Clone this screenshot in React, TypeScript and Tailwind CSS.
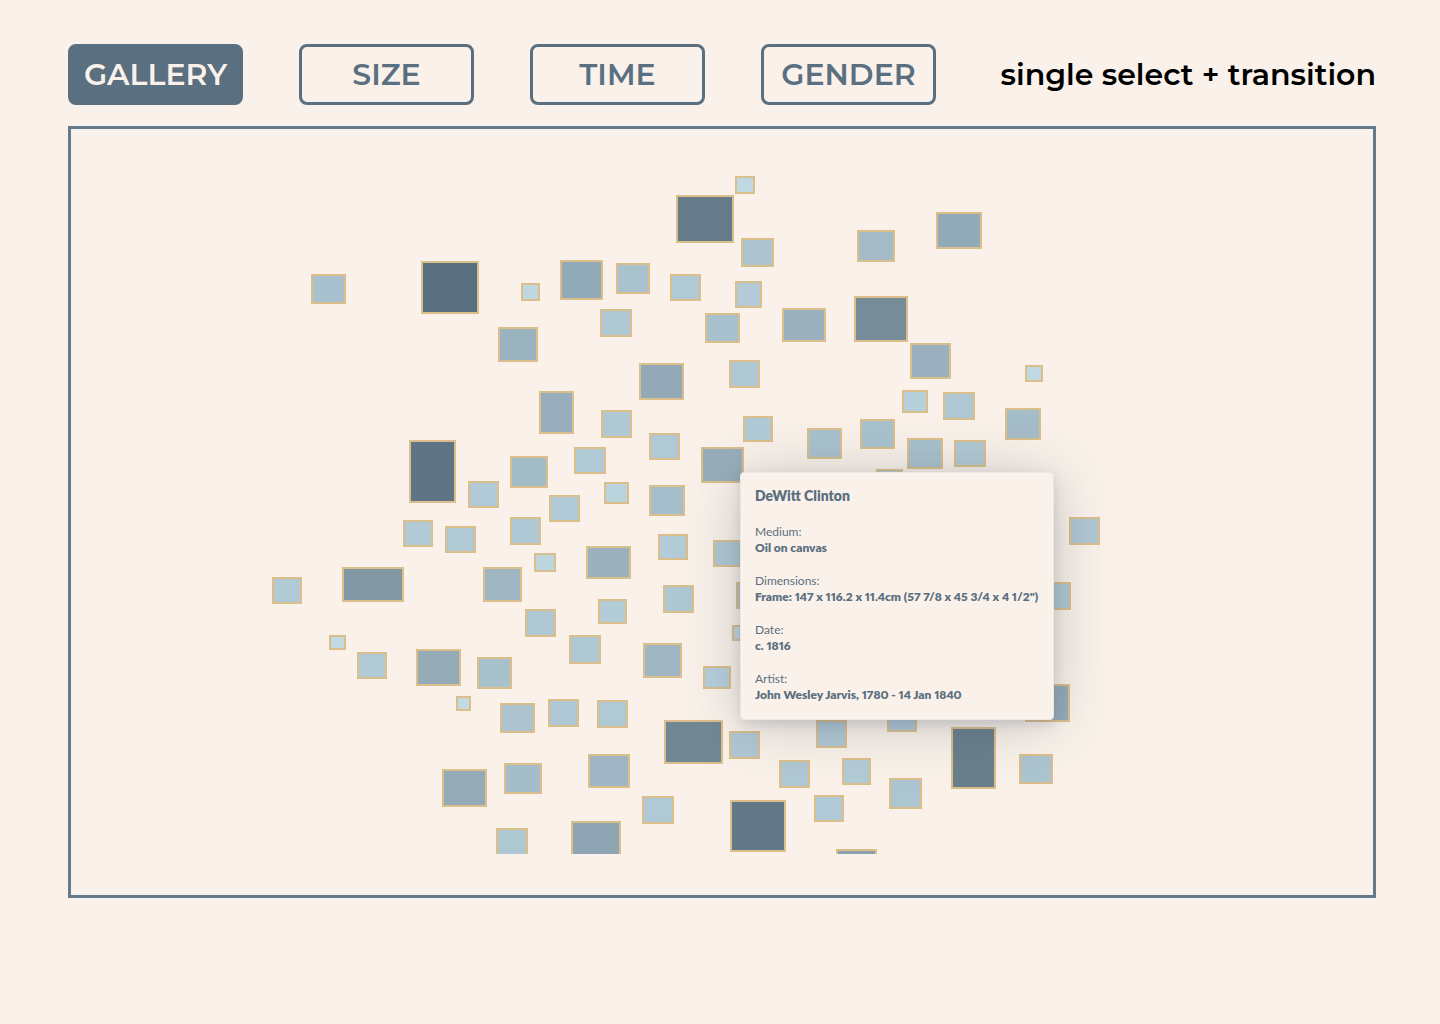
import { useState } from "react";

type Painting = [x: number, y: number, width: number, height: number, fill: string];

const paintings: Painting[] = [
  [311, 274, 35, 30, "#a9c1ce"],
  [421, 261, 58, 53, "#5a6f80"],
  [521, 283, 19, 18, "#bed7e0"],
  [498, 327, 40, 35, "#9bb2bf"],
  [539, 391, 35, 43, "#98aebd"],
  [735, 176, 20, 18, "#bfd8e1"],
  [676, 195, 58, 48, "#667b89"],
  [741, 238, 33, 29, "#adc4d0"],
  [560, 260, 43, 40, "#92a9b7"],
  [616, 263, 34, 31, "#aac1ce"],
  [670, 274, 31, 27, "#b1c9d5"],
  [735, 281, 27, 27, "#b4cbd7"],
  [600, 309, 32, 28, "#afc8d3"],
  [705, 313, 35, 30, "#a9c1ce"],
  [782, 308, 44, 34, "#9bb1be"],
  [639, 363, 45, 37, "#93a9b7"],
  [729, 360, 31, 28, "#afc8d4"],
  [857, 230, 38, 32, "#a5bbc8"],
  [936, 212, 46, 37, "#92a9b7"],
  [854, 296, 54, 46, "#768c99"],
  [910, 343, 41, 36, "#9ab0be"],
  [1025, 365, 18, 17, "#c0d8e2"],
  [902, 390, 26, 23, "#b8d0dc"],
  [943, 392, 32, 28, "#b0c7d4"],
  [1005, 408, 36, 32, "#a5bcc9"],
  [860, 419, 35, 30, "#aac2cf"],
  [807, 428, 35, 31, "#aac2cf"],
  [907, 438, 36, 31, "#a9c1ce"],
  [954, 440, 32, 27, "#b2cad6"],
  [876, 469, 27, 24, "#b4ccd8"],
  [409, 440, 47, 63, "#5f7484"],
  [510, 456, 38, 32, "#a3bac7"],
  [468, 481, 31, 27, "#b2cad7"],
  [403, 520, 30, 27, "#b2cad7"],
  [445, 526, 31, 27, "#b1c9d5"],
  [510, 517, 31, 28, "#b0c8d5"],
  [534, 553, 22, 19, "#bcd6df"],
  [483, 567, 39, 35, "#9fb5c1"],
  [342, 567, 62, 35, "#8197a4"],
  [272, 577, 30, 27, "#b2cad5"],
  [525, 609, 31, 28, "#afc8d4"],
  [549, 495, 31, 27, "#b2cad7"],
  [601, 410, 31, 28, "#b0c8d4"],
  [574, 447, 32, 27, "#b1c9d5"],
  [649, 433, 31, 27, "#b1c9d5"],
  [701, 447, 43, 36, "#98adbb"],
  [604, 482, 25, 22, "#bad3dd"],
  [649, 485, 36, 31, "#a7becc"],
  [658, 534, 30, 26, "#b3ccd7"],
  [713, 540, 32, 27, "#b0c8d5"],
  [586, 546, 45, 33, "#9bb1be"],
  [663, 585, 31, 28, "#afc7d3"],
  [598, 599, 29, 25, "#b4ccd8"],
  [736, 582, 31, 27, "#b0c8d5"],
  [732, 625, 17, 16, "#c0d8e2"],
  [743, 416, 30, 26, "#b2cad7"],
  [569, 635, 32, 29, "#aec7d3"],
  [329, 635, 17, 15, "#c1dae4"],
  [357, 652, 30, 27, "#b2cad6"],
  [416, 649, 45, 37, "#96abb8"],
  [477, 657, 35, 32, "#a9c1cd"],
  [456, 696, 15, 15, "#c1dae3"],
  [500, 703, 35, 30, "#adc3d0"],
  [442, 769, 45, 38, "#95abb8"],
  [504, 763, 38, 31, "#a5bcc9"],
  [496, 828, 32, 30, "#afc7d3"],
  [548, 699, 31, 28, "#b0c8d5"],
  [597, 700, 31, 28, "#b1c9d5"],
  [643, 643, 39, 35, "#a0b6c3"],
  [703, 666, 28, 23, "#b6cfdb"],
  [664, 720, 59, 44, "#718894"],
  [729, 731, 31, 28, "#b0c8d4"],
  [779, 760, 31, 28, "#b0c8d4"],
  [588, 754, 42, 34, "#a0b5c3"],
  [642, 796, 32, 28, "#b1c9d5"],
  [571, 821, 50, 40, "#8ea4b2"],
  [730, 800, 56, 52, "#627886"],
  [816, 720, 31, 28, "#b0c8d4"],
  [887, 705, 30, 27, "#b2cad7"],
  [951, 727, 45, 62, "#697f8d"],
  [1025, 684, 45, 38, "#95abb8"],
  [1019, 754, 34, 30, "#adc4d1"],
  [842, 758, 29, 27, "#b3cbd7"],
  [889, 778, 33, 31, "#adc4d1"],
  [814, 795, 30, 27, "#b2cad7"],
  [836, 849, 41, 30, "#8aa0ae"],
  [1069, 517, 31, 28, "#afc7d3"],
  [1040, 582, 31, 28, "#b0c8d4"],
];

const views = ["GALLERY", "SIZE", "TIME", "GENDER"];

const details = [
  { label: "Medium:", value: "Oil on canvas" },
  { label: "Dimensions:", value: 'Frame: 147 x 116.2 x 11.4cm (57 7/8 x 45 3/4 x 4 1/2")' },
  { label: "Date:", value: "c. 1816" },
  { label: "Artist:", value: "John Wesley Jarvis, 1780 - 14 Jan 1840" },
];

function ViewButton({ name, active, onSelect }: { name: string; active: boolean; onSelect: () => void }) {
  return (
    <button
      type="button"
      aria-pressed={active}
      onClick={onSelect}
      className={
        "flex h-[61px] w-[175px] items-center justify-center rounded-lg border-3 border-[#5a6f80] text-3xl font-semibold transition-colors " +
        (active ? "bg-[#5a6f80] text-[#faf2ea]" : "text-[#5a6f80]")
      }
    >
      {name}
    </button>
  );
}

function PaintingCard() {
  return (
    <article className="absolute top-[298px] left-[468px] w-[314px] rounded-sm border border-[#ede7e1] bg-[#faf2ea] px-3.5 pt-[15px] pb-4 font-['Proxima_Nova',Lato,sans-serif] text-xs text-[#5a6f80] proportional-nums shadow-[0_4px_12px_rgba(70,80,110,0.18),0_4px_60px_rgba(70,80,90,0.28)]">
      <h2 className="text-sm leading-4 font-extrabold">DeWitt Clinton</h2>
      <dl className="mt-5 flex flex-col gap-[17px] leading-4 whitespace-nowrap">
        {details.map((d) => (
          <div key={d.label}>
            <dt>{d.label}</dt>
            <dd className="font-extrabold">{d.value}</dd>
          </div>
        ))}
      </dl>
    </article>
  );
}

export default function App() {
  const [view, setView] = useState("GALLERY");

  return (
    <div className="min-h-screen bg-[#faf2ea] pt-11 pr-16 pb-16 pl-[68px] font-[Montserrat,Inter,sans-serif]">
      <header className="flex items-center justify-between">
        <nav className="flex gap-14">
          {views.map((name) => (
            <ViewButton key={name} name={name} active={name === view} onSelect={() => setView(name)} />
          ))}
        </nav>
        <p className="text-3xl font-semibold whitespace-nowrap text-black">single select + transition</p>
      </header>

      <main className="mt-[21px] border-3 border-[#657a8a] pt-[45px] pb-[41px]">
        <div className="relative mx-auto w-[900px]">
          <svg viewBox="272 174 900 680" className="block w-full" role="img" aria-label="Paintings by size">
            {paintings.map(([x, y, width, height, fill]) => (
              <rect
                key={`${x}-${y}`}
                x={x + 1}
                y={y + 1}
                width={width - 2}
                height={height - 2}
                fill={fill}
                stroke="#dbbf8b"
                strokeWidth="2"
              />
            ))}
          </svg>
          <PaintingCard />
        </div>
      </main>
    </div>
  );
}
